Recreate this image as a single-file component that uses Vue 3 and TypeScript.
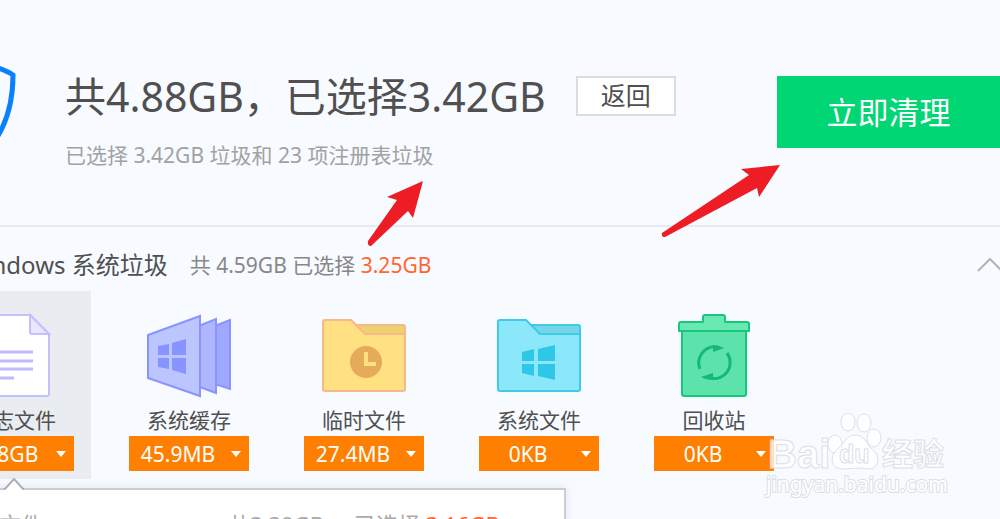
<script setup lang="ts">
interface Category {
  id: string
  name: string
  size: string
  active?: boolean
}

const categories: Category[] = [
  { id: 'log', name: '日志文件', size: '3.38GB', active: true },
  { id: 'cache', name: '系统缓存', size: '45.9MB' },
  { id: 'temp', name: '临时文件', size: '27.4MB' },
  { id: 'system', name: '系统文件', size: '0KB' },
  { id: 'trash', name: '回收站', size: '0KB' },
]
</script>

<template>
  <main class="page">
    <header class="summary">
      <svg class="shield" viewBox="0 0 96 112" aria-hidden="true">
        <path d="M48 2C38 10 23 14 3 19C3 45 9 66 20 83C28 95 38 103 48 108C58 103 68 95 76 83C87 66 93 45 93 19C82 11 63 8 48 2Z" />
      </svg>
      <div class="totals">
        <div class="title-row">
          <h1>共4.88GB，已选择3.42GB</h1>
          <button class="back" type="button">返回</button>
        </div>
        <p>已选择 3.42GB 垃圾和 23 项注册表垃圾</p>
      </div>
      <button class="clean" type="button">立即清理</button>
    </header>

    <section class="group">
      <div class="group-head">
        <h2>Windows 系统垃圾</h2>
        <p>共 4.59GB 已选择 <strong>3.25GB</strong></p>
        <button class="collapse" type="button" aria-label="收起">
          <svg viewBox="0 0 28 16" aria-hidden="true"><path d="M2 14L14 2L26 14" /></svg>
        </button>
      </div>

      <ul class="cards">
        <li v-for="c in categories" :key="c.id" class="card" :class="{ active: c.active }">
          <svg v-if="c.id === 'log'" class="icon" viewBox="0 0 84 84" aria-hidden="true">
            <path d="M12 0H58L77 19V79Q77 81 75 81H12Q10 81 10 79V2Q10 0 12 0Z" fill="#fff" stroke="#c3c0fb" stroke-width="2" />
            <path d="M58 0V17Q58 19 60 19H77Z" fill="#e8e7fd" stroke="#c3c0fb" stroke-width="2" />
            <path d="M22 37H61M22 46H61M22 54H61M22 63H42" fill="none" stroke="#bdbaff" stroke-width="3" />
          </svg>
          <svg v-else-if="c.id === 'cache'" class="icon" viewBox="0 0 84 84" aria-hidden="true">
            <g stroke="#8994ff" stroke-width="2">
              <path d="M55 16L83 5V74L55 65Z" fill="#9fa8ff" />
              <path d="M42 15L69 4V78L42 68Z" fill="#aeb6ff" />
              <path d="M1 20L53 1V81L1 63Z" fill="#bdc5ff" />
            </g>
            <path d="M11 31L22 29V40H11ZM25 28L39 24V40H25ZM11 43H22V54L11 52ZM25 43H39V59L25 55Z" fill="#8793ff" />
          </svg>
          <svg v-else-if="c.id === 'temp'" class="icon" viewBox="0 0 84 84" aria-hidden="true">
            <path d="M30 10H81Q83 10 83 12V19H38Z" fill="#edd26d" stroke="#f7b98b" stroke-width="2" />
            <path d="M3 5H29L43 19H83V74Q83 76 81 76H3Q1 76 1 74V7Q1 5 3 5Z" fill="#ffe181" stroke="#f7b98b" stroke-width="2" />
            <circle cx="44" cy="47" r="16" fill="#e6aa5b" />
            <path d="M44 37V49H54" fill="none" stroke="#ffe181" stroke-width="4" />
          </svg>
          <svg v-else-if="c.id === 'system'" class="icon" viewBox="0 0 84 84" aria-hidden="true">
            <path d="M30 10H81Q83 10 83 12V19H38Z" fill="#77d5e9" stroke="#3dcbe8" stroke-width="2" />
            <path d="M3 5H29L43 19H83V74Q83 76 81 76H3Q1 76 1 74V7Q1 5 3 5Z" fill="#8be8fb" stroke="#3dcbe8" stroke-width="2" />
            <path d="M25 37L37 34V46H25ZM41 34L58 30V46H41ZM25 49H37V61L25 58ZM41 49H58V65L41 61Z" fill="#2fc7e8" />
          </svg>
          <svg v-else class="icon" viewBox="0 0 84 84" aria-hidden="true">
            <g stroke="#17c87c" stroke-width="2" stroke-linejoin="round">
              <path d="M10 16H74V79Q74 81 72 81H12Q10 81 10 79Z" fill="#5ce2ab" />
              <path d="M7 16V9Q7 7 9 7H31V2Q31 0 33 0H51Q53 0 53 2V7H75Q77 7 77 9V16Z" fill="#69e8b4" />
            </g>
            <path d="M28 54A16 16 0 0 1 45 32" fill="none" stroke="#14b877" stroke-width="3" />
            <path d="M55 38A16 16 0 0 1 38 63" fill="none" stroke="#14b877" stroke-width="3" />
            <path d="M41 30Q47 30 52 33L41 37ZM41 65Q34 65 29 62L41 58Z" fill="#14b877" />
          </svg>
          <span class="name">{{ c.name }}</span>
          <button class="size" type="button">
            <span>{{ c.size }}</span>
            <svg viewBox="0 0 10 6" aria-hidden="true"><path d="M0 0H10L5 6Z" /></svg>
          </button>
        </li>
      </ul>

      <div class="detail">
        <svg class="caret" viewBox="0 0 22 12" aria-hidden="true"><path d="M1 12L11 1L21 12" /></svg>
        <span class="detail-name">日志文件</span>
        <span class="detail-total">共3.38GB</span>
        <span>已选择 <strong>3.16GB</strong></span>
      </div>
    </section>

    <svg class="arrow arrow-small" viewBox="0 0 58 68" aria-hidden="true">
      <path d="M56 2L20 18L30 21L1 62Q0 67 4 67L41 32L46 39Z" />
    </svg>
    <svg class="arrow arrow-large" viewBox="0 0 120 74" aria-hidden="true">
      <path d="M119 1L80 5L88 11L1 69Q0 73 4 73L96 24L98 33Z" />
    </svg>

    <svg class="watermark" viewBox="0 0 190 90" aria-hidden="true">
      <g class="mark">
        <text class="brand" x="4" y="57">Bai</text>
        <ellipse cx="71" cy="33" rx="7" ry="9" />
        <ellipse cx="84" cy="11" rx="7" ry="9" />
        <ellipse cx="100" cy="12" rx="7" ry="9" />
        <ellipse cx="110" cy="27" rx="7" ry="9" />
        <path d="M91 24C82 24 80 33 74 38C65 45 66 58 80 58C86 58 96 56 103 58C115 59 117 45 109 39C103 34 101 24 91 24Z" />
        <text class="du" x="75" y="52">du</text>
        <text class="jingyan" x="118" y="54">经验</text>
        <text class="url" x="2" y="81">jingyan.baidu.com</text>
      </g>
    </svg>
  </main>
</template>

<style>
html,
body {
  background: #f7faff;
}
</style>

<style scoped>
* {
  box-sizing: border-box;
}
.page {
  position: relative;
  height: 100vh;
  overflow: hidden;
  background: #f7faff;
  color: #505050;
  font-family: "Noto Sans", "Noto Sans CJK SC", sans-serif;
}
h1,
h2,
p,
ul {
  margin: 0;
  padding: 0;
  font-weight: 400;
}
strong {
  font-weight: 400;
  color: #ff6633;
}
button {
  font-family: inherit;
  padding: 0;
  border: 0;
  border-radius: 0;
  cursor: pointer;
}
.summary {
  display: flex;
  align-items: flex-start;
  padding-top: 60px;
  height: 227px;
  border-bottom: 2px solid #e6eaf5;
}
.shield {
  flex: none;
  width: 96px;
  height: 112px;
  margin-left: -80px;
  margin-top: -4px;
}
.shield path {
  fill: none;
  stroke: #0a80ff;
  stroke-width: 5;
}
.totals {
  flex: none;
  margin-left: 49px;
}
.title-row {
  display: flex;
  align-items: center;
  height: 72px;
}
h1 {
  font-size: 41px;
  line-height: 72px;
  white-space: nowrap;
}
.back {
  width: 100px;
  height: 40px;
  margin-left: 30px;
  padding-bottom: 3px;
  background: #fff;
  border: 2px solid #dcdcdc;
  color: #505050;
  font-size: 25px;
  line-height: 32px;
}
.totals p {
  font-size: 21px;
  line-height: 30px;
  margin-top: 8px;
  color: #a2a2a2;
  white-space: nowrap;
}
.clean {
  flex: none;
  width: 223px;
  height: 72px;
  margin-top: 16px;
  margin-left: auto;
  padding-bottom: 3px;
  background: #00d673;
  color: #fff;
  font-size: 31px;
}
.group-head {
  display: flex;
  align-items: center;
  height: 64px;
  padding-top: 12px;
  margin-left: -37px;
  white-space: nowrap;
}
h2 {
  font-size: 24px;
  line-height: 32px;
}
.group-head p {
  margin-left: 22px;
  font-size: 21px;
  line-height: 32px;
  color: #888;
}
.collapse {
  flex: none;
  width: 28px;
  height: 16px;
  margin-left: auto;
  margin-right: -4px;
  background: none;
}
.collapse svg {
  display: block;
}
.collapse path {
  fill: none;
  stroke: #b4b4b4;
  stroke-width: 2;
}
.cards {
  display: flex;
  gap: 21px;
  margin-left: -63px;
  list-style: none;
}
.card {
  flex: none;
  display: flex;
  flex-direction: column;
  align-items: center;
  width: 154px;
  height: 188px;
  padding-top: 24px;
}
.card.active {
  background: #e9ecf1;
}
.icon {
  width: 84px;
  height: 84px;
  overflow: visible;
}
.name {
  margin-top: 7px;
  height: 30px;
  font-size: 21px;
  line-height: 28px;
}
.size {
  display: flex;
  align-items: center;
  width: 120px;
  height: 35px;
  background: #ff8000;
  color: #fff;
  font-size: 21px;
  line-height: 35px;
}
.size span {
  flex: 1;
  padding-top: 2px;
  padding-right: 4px;
}
.size svg {
  flex: none;
  width: 10px;
  height: 6px;
  margin-right: 8px;
  fill: #fff;
}
.detail {
  position: relative;
  display: flex;
  width: 629px;
  height: 120px;
  margin-top: 9px;
  margin-left: -63px;
  padding-top: 20px;
  padding-left: 16px;
  background: #fff;
  border: 2px solid #cbcdd0;
  box-shadow: 0 0 8px #dfe5ed;
  font-size: 22px;
  line-height: 28px;
  color: #aaa;
}
.caret {
  position: absolute;
  left: 64px;
  top: -12px;
  width: 22px;
  height: 12px;
  fill: #fff;
  stroke: #adafb2;
  stroke-width: 2;
}
.detail-name {
  width: 273px;
}
.detail-total {
  width: 126px;
}
.arrow {
  position: absolute;
  fill: #ee1c25;
}
.arrow-small {
  left: 367px;
  top: 179px;
  width: 58px;
  height: 68px;
}
.arrow-large {
  left: 661px;
  top: 164px;
  width: 120px;
  height: 74px;
}
.watermark {
  position: absolute;
  left: 764px;
  top: 411px;
  width: 190px;
  height: 90px;
}
.mark {
  fill: #fff;
  fill-opacity: 0.75;
  stroke: #dcdfe4;
  stroke-width: 1;
}
.brand {
  font-family: "Liberation Sans", sans-serif;
  font-weight: 700;
  font-size: 40px;
}
.du {
  font-family: "Liberation Sans", sans-serif;
  font-weight: 700;
  font-size: 25px;
}
.jingyan {
  font-family: "Noto Sans CJK SC", sans-serif;
  font-weight: 700;
  font-size: 31px;
}
.url {
  font-size: 21px;
  paint-order: stroke;
  fill-opacity: 1;
  stroke-width: 2;
}
</style>
